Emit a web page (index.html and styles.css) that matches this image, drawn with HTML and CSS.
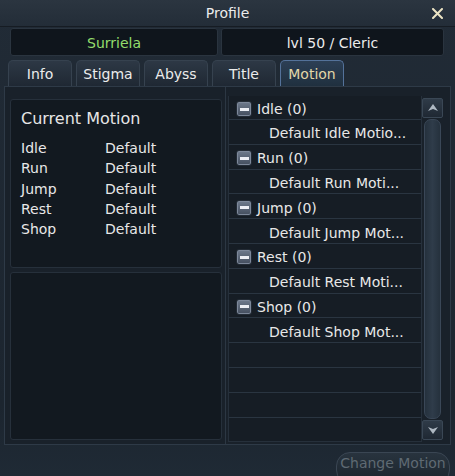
FILE: index.html
```html
<!DOCTYPE html>
<html>
<head>
<meta charset="utf-8">
<link rel="stylesheet" href="styles.css">
</head>
<body>
<div class="window">
  <div class="titlebar">
    <span class="title">Profile</span>
    <svg class="close" width="11" height="11" viewBox="0 0 11 11"><path d="M1 1L10 10M10 1L1 10" stroke="#ece4c4" stroke-width="2" stroke-linecap="round"/></svg>
  </div>
  <div class="namebar">
    <div class="namebox name">Surriela</div>
    <div class="namebox level">lvl 50 / Cleric</div>
  </div>
  <div class="tabs">
    <div class="tab">Info</div>
    <div class="tab">Stigma</div>
    <div class="tab">Abyss</div>
    <div class="tab">Title</div>
    <div class="tab active">Motion</div>
  </div>
  <div class="main">
    <div class="left">
      <div class="box curbox">
        <div class="curtitle">Current Motion</div>
        <div class="currows">
          <div class="crow"><span class="clabel">Idle</span><span>Default</span></div>
          <div class="crow"><span class="clabel">Run</span><span>Default</span></div>
          <div class="crow"><span class="clabel">Jump</span><span>Default</span></div>
          <div class="crow"><span class="clabel">Rest</span><span>Default</span></div>
          <div class="crow"><span class="clabel">Shop</span><span>Default</span></div>
        </div>
      </div>
      <div class="box emptybox"></div>
    </div>
    <div class="right">
      <div class="list">
        <div class="row head first"><span class="minus"></span>Idle (0)</div>
        <div class="row child">Default Idle Motio...</div>
        <div class="row head"><span class="minus"></span>Run (0)</div>
        <div class="row child">Default Run Moti...</div>
        <div class="row head"><span class="minus"></span>Jump (0)</div>
        <div class="row child">Default Jump Mot...</div>
        <div class="row head"><span class="minus"></span>Rest (0)</div>
        <div class="row child">Default Rest Moti...</div>
        <div class="row head"><span class="minus"></span>Shop (0)</div>
        <div class="row child">Default Shop Mot...</div>
        <div class="row"></div>
        <div class="row"></div>
        <div class="row"></div>
        <div class="row"></div>
      </div>
      <div class="scroll">
        <div class="sbtn"><svg width="12" height="10" viewBox="0 0 12 10"><path d="M6 1L11 8L6 6L1 8Z" fill="#aeb8c2"/></svg></div>
        <div class="track"><div class="thumb"></div></div>
        <div class="sbtn"><svg width="12" height="10" viewBox="0 0 12 10"><path d="M6 9L11 2L6 4L1 2Z" fill="#aeb8c2"/></svg></div>
      </div>
    </div>
  </div>
  <div class="footer">
    <div class="button">Change Motion</div>
  </div>
</div>
</body>
</html>
```
FILE: styles.css
```css
html, body {
  margin: 0;
  padding: 0;
  background: #1d2630;
}
body {
  font-family: "DejaVu Sans", "Liberation Sans", sans-serif;
  font-size: 14px;
  color: #e8e8e8;
}
.window {
  width: 455px;
  height: 476px;
  display: flex;
  flex-direction: column;
  overflow: hidden;
  background: linear-gradient(#212b36, #1c252f 85%, #1f2a35);
}
.titlebar {
  height: 26px;
  flex: none;
  display: flex;
  align-items: center;
  justify-content: center;
  position: relative;
  background: linear-gradient(#2b3540, #232d38);
  border-bottom: 1px solid #161c23;
}
.title {
  color: #ececec;
  line-height: 26px;
}
.close {
  position: absolute;
  right: 12px;
  top: 8px;
}
.namebar {
  display: flex;
  gap: 3px;
  padding: 1px 0 0 10px;
  flex: none;
}
.namebox {
  height: 28px;
  box-sizing: border-box;
  padding-top: 1px;
  background: #0f151c;
  border: 1px solid #2a343f;
  border-radius: 3px;
  display: flex;
  align-items: center;
  justify-content: center;
}
.name {
  width: 208px;
  color: #93dd6c;
}
.level {
  width: 223px;
  color: #ececec;
}
.tabs {
  display: flex;
  gap: 4px;
  padding: 4px 0 0 8px;
  flex: none;
}
.tab {
  width: 64px;
  height: 26px;
  box-sizing: border-box;
  border: 1px solid #36424f;
  border-bottom: none;
  border-radius: 5px 5px 0 0;
  background: linear-gradient(#2d3845, #1f2833);
  display: flex;
  align-items: center;
  justify-content: center;
  color: #ececec;
}
.tab.active {
  border-color: #54729a;
  background: linear-gradient(#2c3f55, #20303f);
  color: #e2d7a8;
}
.main {
  margin: 0 4px;
  height: 359px;
  box-sizing: border-box;
  border: 1px solid #2e3a47;
  background: #19212a;
  display: flex;
  flex: none;
}
.left {
  width: 221px;
  box-sizing: border-box;
  padding: 12px 4px 0 5px;
  display: flex;
  flex-direction: column;
  gap: 4px;
  border-right: 1px solid #2c3743;
}
.box {
  box-sizing: border-box;
  width: 212px;
  background: #121920;
  border: 1px solid #26303b;
  border-radius: 3px;
}
.curbox {
  height: 169px;
  padding: 9px 10px 0 10px;
}
.emptybox {
  height: 168px;
}
.curtitle {
  font-size: 16px;
  line-height: 20px;
  color: #e6e6e6;
}
.currows {
  margin-top: 9px;
}
.crow {
  display: flex;
  line-height: 20.3px;
}
.clabel {
  width: 84px;
}
.right {
  flex: 1;
  display: flex;
  padding: 9px 3px 0 2px;
}
.list {
  width: 194px;
  height: 346px;
  overflow: hidden;
  box-sizing: border-box;
  background: #161d25;
  border: 1px solid #26303b;
  border-top: none;
}
.row {
  height: 24.8px;
  box-sizing: border-box;
  padding-top: 3px;
  border-bottom: 1px solid #2a3541;
  display: flex;
  align-items: center;
  white-space: nowrap;
}
.row.first {
  height: 24px;
}
.row.head {
  padding-left: 7px;
  gap: 5px;
}
.row.child {
  padding-left: 40px;
}
.minus {
  width: 16px;
  height: 16px;
  box-sizing: border-box;
  border: 1px solid #232b35;
  border-radius: 3px;
  background: linear-gradient(#6f7b8d, #434d5d);
  box-shadow: inset 0 0 0 1px #7d889a;
  display: flex;
  align-items: center;
  justify-content: center;
}
.minus::before {
  content: "";
  width: 9px;
  height: 3px;
  background: #eceef4;
}
.scroll {
  width: 21px;
  margin-top: 2px;
  height: 342px;
  display: flex;
  flex-direction: column;
  gap: 1px;
}
.sbtn {
  height: 20px;
  box-sizing: border-box;
  border: 1px solid #3a4755;
  border-radius: 2px;
  background: linear-gradient(#2f3b48, #1f2833);
  display: flex;
  align-items: center;
  justify-content: center;
}
.track {
  flex: 1;
  padding: 0 2px;
  display: flex;
}
.thumb {
  flex: 1;
  border: 1px solid #3a4757;
  border-radius: 7px;
  background: linear-gradient(90deg, #25313d, #2f3c4a 50%, #25313d);
}
.footer {
  flex: 1;
  display: flex;
  justify-content: flex-end;
  padding: 7px 5px 0 0;
}
.button {
  width: 114px;
  height: 32px;
  box-sizing: border-box;
  border: 1px solid #3a4653;
  border-radius: 14px;
  background: linear-gradient(#28333e, #1b242d);
  color: #5f6a73;
  text-align: center;
  line-height: 21px;
}
```
